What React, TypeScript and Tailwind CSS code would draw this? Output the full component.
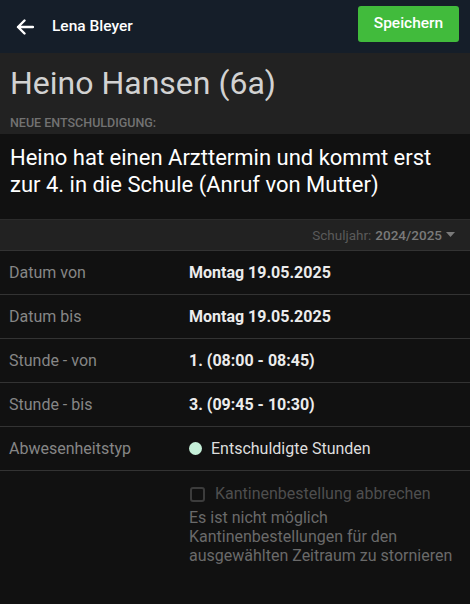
import React from 'react';

const rows = [
  { label: 'Datum von', value: 'Montag 19.05.2025' },
  { label: 'Datum bis', value: 'Montag 19.05.2025' },
  { label: 'Stunde - von', value: '1. (08:00 - 08:45)' },
  { label: 'Stunde - bis', value: '3. (09:45 - 10:30)' },
];

const App: React.FC = () => {
  return (
    <div className="min-h-[604px] bg-[#111111] font-['Roboto',sans-serif]">
      {/* Header */}
      <header className="h-[53px] bg-[#151e29] flex items-center pl-4 pr-[11px]">
        <svg width="18" height="16" viewBox="0 0 18 16" fill="none" className="mr-[18px]">
          <path d="M17 8H2M8.5 1.5L2 8l6.5 6.5" stroke="white" strokeWidth="2.4" strokeLinecap="round" strokeLinejoin="round" />
        </svg>
        <span className="text-white text-[15.5px] font-medium">Lena Bleyer</span>
        <button className="ml-auto mb-[6px] h-[36px] w-[101px] rounded-[3px] bg-[#41bb3c] text-white text-[15.5px] font-medium">
          Speichern
        </button>
      </header>

      {/* Title */}
      <section className="bg-[#222222] px-[10px] pt-[10px] pb-[4px]">
        <h1 className="text-[#d2d2d2] text-[32px] leading-[40px]">Heino Hansen (6a)</h1>
        <p className="text-[#727272] text-[12.5px] font-medium uppercase leading-[14px] mt-[13px]">Neue Entschuldigung:</p>
      </section>

      {/* Description */}
      <section className="bg-[#111111] px-[10px] pt-[10px] h-[85px]">
        <p className="text-white text-[22px] leading-[27px]">
          Heino hat einen Arzttermin und kommt erst zur 4. in die Schule (Anruf von Mutter)
        </p>
      </section>

      {/* Schuljahr */}
      <div className="bg-[#222222] h-[31px] border-t border-[#2c2c2c] flex items-center justify-end pr-[15px] text-[13.5px]">
        <span className="text-[#5a5a5a]">Schuljahr:</span>
        <span className="text-[#7a7a7a] font-medium ml-[4px]">2024/2025</span>
        <svg width="9" height="6" viewBox="0 0 9 6" className="ml-[4px]">
          <path d="M0 0h9L4.5 5z" fill="#7a7a7a" />
        </svg>
      </div>

      {/* Table */}
      <div className="border-t border-[#333333]">
        {rows.map((r) => (
          <div key={r.label} className="flex items-center h-[44px] border-b border-[#333333]">
            <span className="w-[189px] pl-[9px] text-[#868686] text-[16px]">{r.label}</span>
            <span className="text-[#ececec] text-[16px] font-bold">{r.value}</span>
          </div>
        ))}
        <div className="flex items-center h-[44px] border-b border-[#333333]">
          <span className="w-[189px] pl-[9px] text-[#868686] text-[16px]">Abwesenheitstyp</span>
          <span className="w-[13px] h-[13px] rounded-full bg-[#c6f0d9] mr-[9px]"></span>
          <span className="text-[#dedede] text-[16px]">Entschuldigte Stunden</span>
        </div>
      </div>

      {/* Kantine */}
      <div className="pl-[189px] pt-[11px] pr-[10px]">
        <label className="flex items-center gap-[10px] text-[#4e4e4e] text-[16px]">
          <span className="w-[15px] h-[15px] rounded-[3px] border-2 border-[#3c3c3c] ml-[1px]"></span>
          Kantinenbestellung abbrechen
        </label>
        <p className="text-[#6a6a6a] text-[16px] leading-[19px] mt-[2px]">
          Es ist nicht möglich Kantinenbestellungen für den ausgewählten Zeitraum zu stornieren
        </p>
      </div>
    </div>
  );
};

export default App;
